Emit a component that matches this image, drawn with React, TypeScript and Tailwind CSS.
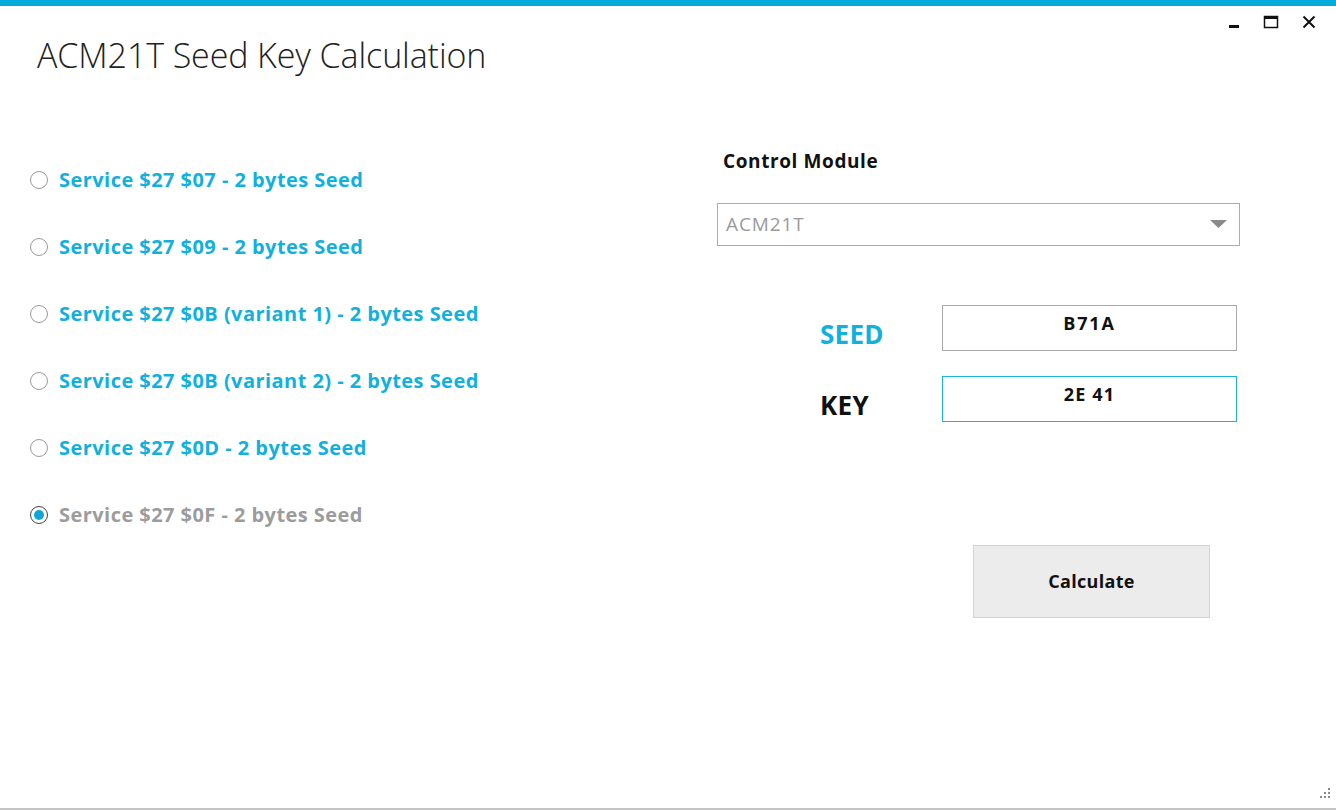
import React, { useState } from "react";

const services = [
  "Service $27 $07 - 2 bytes Seed",
  "Service $27 $09 - 2 bytes Seed",
  "Service $27 $0B (variant 1) - 2 bytes Seed",
  "Service $27 $0B (variant 2) - 2 bytes Seed",
  "Service $27 $0D - 2 bytes Seed",
  "Service $27 $0F - 2 bytes Seed",
];

function Radio({ checked }: { checked: boolean }) {
  return (
    <span
      className={
        "flex h-[18px] w-[18px] shrink-0 items-center justify-center rounded-full border-[1.5px] bg-white " +
        (checked ? "border-[#444]" : "border-[#9a9a9a]")
      }
    >
      {checked && <span className="h-[10px] w-[10px] rounded-full bg-[#0ea5d8]" />}
    </span>
  );
}

export default function App() {
  const [selected, setSelected] = useState(5);

  return (
    <div
      className="relative flex h-[810px] w-[1336px] flex-col overflow-hidden bg-white"
      style={{ fontFamily: '"Open Sans", "Noto Sans", sans-serif' }}
    >
      <div className="h-[6px] bg-[#00acd9]" />

      {/* title bar */}
      <div className="flex items-start justify-between">
        <h1 className="ml-[37px] mt-[29px] text-[34px] font-light leading-[40px] tracking-[-0.1px] text-[#222]">
          ACM21T Seed Key Calculation
        </h1>
        <div className="mr-[20px] mt-[9px] flex items-center gap-[23px] text-[#111]">
          <svg width="12" height="14" viewBox="0 0 12 14">
            <rect x="1" y="10" width="10" height="3" fill="#111" />
          </svg>
          <svg width="16" height="14" viewBox="0 0 16 14">
            <rect x="1.5" y="1.5" width="13" height="11" fill="none" stroke="#111" strokeWidth="1.5" />
            <rect x="1.5" y="1.5" width="13" height="2.5" fill="#111" />
          </svg>
          <svg width="14" height="14" viewBox="0 0 14 14">
            <path d="M1.5 1.5 L12.5 12.5 M12.5 1.5 L1.5 12.5" stroke="#111" strokeWidth="2" />
          </svg>
        </div>
      </div>

      <div className="mt-[92px] flex">
        {/* left: service radios */}
        <div className="ml-[30px] flex w-[687px] flex-col gap-[41px]">
          {services.map((s, i) => (
            <label
              key={s}
              className="flex h-[26px] cursor-pointer items-center gap-[11px]"
              onClick={() => setSelected(i)}
            >
              <Radio checked={selected === i} />
              <span
                className={
                  "text-[20px] font-bold tracking-[0.45px] " +
                  (selected === i ? "text-[#9c9c9c]" : "text-[#12b0dc]")
                }
              >
                {s}
              </span>
            </label>
          ))}
        </div>

        {/* right: module, seed/key, calculate */}
        <div className="-mt-[19px] flex w-[523px] flex-col">
          <div className="ml-[6px] text-[19px] font-bold leading-[26px] tracking-[0.6px] text-[#111]">
            Control Module
          </div>
          <div className="mt-[29px] flex h-[43px] items-center justify-between border border-[#ababab] bg-white pl-[8px] pr-[12px]">
            <span className="text-[19px] tracking-[0.9px] text-[#9a9a9a]">ACM21T</span>
            <svg width="17" height="9" viewBox="0 0 17 9">
              <path d="M0 0 H17 L8.5 8 Z" fill="#8a8a8a" />
            </svg>
          </div>

          <div className="mt-[59px] flex h-[46px] items-start">
            <span className="ml-[103px] w-[122px] pt-[11px] text-[26px] font-bold leading-[36px] tracking-[0.3px] text-[#12b0dc]">
              SEED
            </span>
            <div className="flex h-[46px] w-[295px] items-start justify-center border-[1.5px] border-[#a8a8a8] pt-[4px] text-[18px] font-bold tracking-[1.8px] text-[#111]">
              B71A
            </div>
          </div>
          <div className="mt-[25px] flex h-[46px] items-start">
            <span className="ml-[103px] w-[122px] pt-[11px] text-[26px] font-bold leading-[36px] tracking-[0.3px] text-[#111]">
              KEY
            </span>
            <div className="flex h-[46px] w-[295px] items-start justify-center border-[1.5px] border-[#1ab4de] pt-[4px] text-[18px] font-bold tracking-[1.2px] text-[#111]">
              2E 41
            </div>
          </div>

          <div className="mt-[123px] flex">
            <button className="ml-[256px] flex h-[73px] w-[237px] items-center justify-center border border-[#d2d2d2] bg-[#ececec] text-[18px] font-bold tracking-[0.3px] text-[#111]">
              Calculate
            </button>
          </div>
        </div>
      </div>

      {/* resize grip */}
      <svg className="absolute bottom-[8px] right-[4px]" width="16" height="16" viewBox="0 0 16 16">
        <rect x="12" y="2" width="2" height="2" fill="#8a8a8a" />
        <rect x="8" y="6" width="2" height="2" fill="#8a8a8a" />
        <rect x="12" y="6" width="2" height="2" fill="#8a8a8a" />
        <rect x="4" y="10" width="2" height="2" fill="#8a8a8a" />
        <rect x="8" y="10" width="2" height="2" fill="#8a8a8a" />
        <rect x="12" y="10" width="2" height="2" fill="#8a8a8a" />
      </svg>
      <div className="absolute bottom-0 left-0 h-[2px] w-full bg-[#c4c4c4]" />
    </div>
  );
}
